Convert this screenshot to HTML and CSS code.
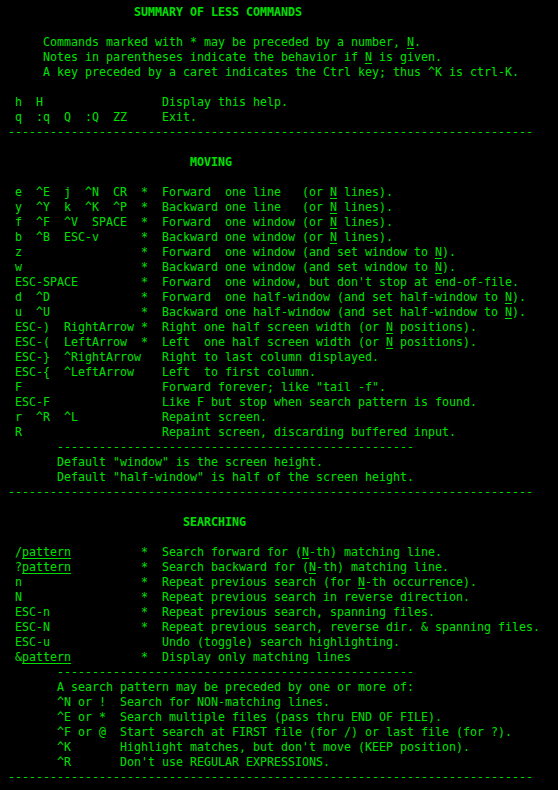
FILE: index.html
```html
<!DOCTYPE html>
<html lang="en">
<head>
  <meta charset="UTF-8">
  <meta name="viewport" content="width=device-width, initial-scale=1.0">
  <title>less - help</title>
  <link rel="stylesheet" href="styles.css">
</head>
<body>

<pre class="screen">
                  <b class="title">SUMMARY OF LESS COMMANDS</b>

     Commands marked with * may be preceded by a number, <u>N</u>.
     Notes in parentheses indicate the behavior if <u>N</u> is given.
     A key preceded by a caret indicates the Ctrl key; thus ^K is ctrl-K.

 h  H                 Display this help.
 q  :q  Q  :Q  ZZ     Exit.
---------------------------------------------------------------------------

                          <b class="title">MOVING</b>

 e  ^E  j  ^N  CR  *  Forward  one line   (or <u>N</u> lines).
 y  ^Y  k  ^K  ^P  *  Backward one line   (or <u>N</u> lines).
 f  ^F  ^V  SPACE  *  Forward  one window (or <u>N</u> lines).
 b  ^B  ESC-v      *  Backward one window (or <u>N</u> lines).
 z                 *  Forward  one window (and set window to <u>N</u>).
 w                 *  Backward one window (and set window to <u>N</u>).
 ESC-SPACE         *  Forward  one window, but don't stop at end-of-file.
 d  ^D             *  Forward  one half-window (and set half-window to <u>N</u>).
 u  ^U             *  Backward one half-window (and set half-window to <u>N</u>).
 ESC-)  RightArrow *  Right one half screen width (or <u>N</u> positions).
 ESC-(  LeftArrow  *  Left  one half screen width (or <u>N</u> positions).
 ESC-}  ^RightArrow   Right to last column displayed.
 ESC-{  ^LeftArrow    Left  to first column.
 F                    Forward forever; like "tail -f".
 ESC-F                Like F but stop when search pattern is found.
 r  ^R  ^L            Repaint screen.
 R                    Repaint screen, discarding buffered input.
       ---------------------------------------------------
       Default "window" is the screen height.
       Default "half-window" is half of the screen height.
---------------------------------------------------------------------------

                         <b class="title">SEARCHING</b>

 /<u>pattern</u>          *  Search forward for (<u>N</u>-th) matching line.
 ?<u>pattern</u>          *  Search backward for (<u>N</u>-th) matching line.
 n                 *  Repeat previous search (for <u>N</u>-th occurrence).
 N                 *  Repeat previous search in reverse direction.
 ESC-n             *  Repeat previous search, spanning files.
 ESC-N             *  Repeat previous search, reverse dir. &amp; spanning files.
 ESC-u                Undo (toggle) search highlighting.
 &amp;<u>pattern</u>          *  Display only matching lines
       ---------------------------------------------------
       A search pattern may be preceded by one or more of:
       ^N or !  Search for NON-matching lines.
       ^E or *  Search multiple files (pass thru END OF FILE).
       ^F or @  Start search at FIRST file (for /) or last file (for ?).
       ^K       Highlight matches, but don't move (KEEP position).
       ^R       Don't use REGULAR EXPRESSIONS.
---------------------------------------------------------------------------
</pre>

</body>
</html>
```

FILE: styles.css
```css
html, body {
  margin: 0;
  background-color: #000;
}
body {
  height: 790px;
  overflow: hidden;
}
.screen {
  margin: 0;
  padding: 5px 0 0 8px;
  font-family: "DejaVu Sans Mono", "Liberation Mono", monospace;
  font-size: 11.63px;
  line-height: 15px;
  color: #00e000;
  white-space: pre;
}
.screen u {
  text-decoration: underline;
  text-underline-offset: 2px;
}
.title {
  font-weight: bold;
}
```
